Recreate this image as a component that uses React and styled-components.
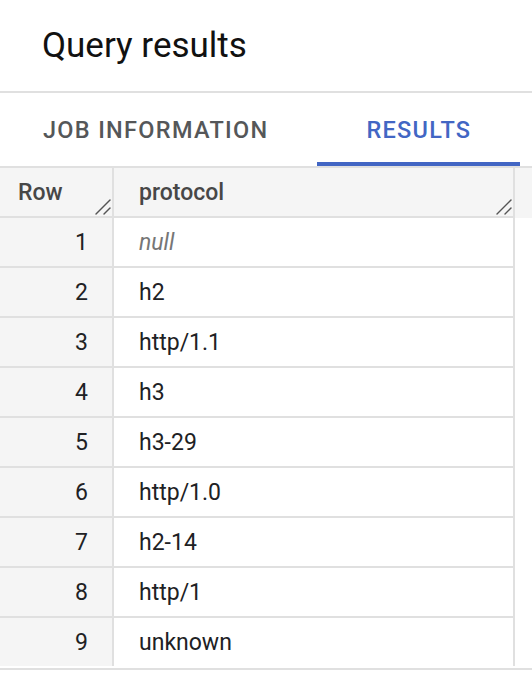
import React from 'react';
import styled, {createGlobalStyle} from 'styled-components';

const rows = ['null', 'h2', 'http/1.1', 'h3', 'h3-29', 'http/1.0', 'h2-14', 'http/1', 'unknown'];

function ResizeHandle() {
    return (
        <Handle width="16" height="16" viewBox="0 0 16 16">
            <line x1="15" y1="1" x2="1" y2="15" />
            <line x1="15" y1="9" x2="9" y2="15" />
        </Handle>
    );
}

export default function App() {
    return (
        <Page>
            <GlobalStyle />
            <Header>
                <Title>Query results</Title>
            </Header>
            <TabBar>
                <Tab>JOB INFORMATION</Tab>
                <Tab active>RESULTS</Tab>
            </TabBar>
            <Table>
                <HeadCell>
                    Row
                    <ResizeHandle />
                </HeadCell>
                <HeadCell>
                    protocol
                    <ResizeHandle />
                </HeadCell>
                <Filler head />
                {rows.map((value, i) => (
                    <React.Fragment key={i}>
                        <NumCell last={i === rows.length - 1}>{i + 1}</NumCell>
                        <ValueCell last={i === rows.length - 1} empty={value === 'null'}>
                            {value}
                        </ValueCell>
                        <Filler />
                    </React.Fragment>
                ))}
            </Table>
        </Page>
    );
}

const GlobalStyle = createGlobalStyle`
    body {
        margin: 0;
        background: #ffffff;
        font-family: Roboto, "Liberation Sans", Arial, sans-serif;
    }
`;

const Page = styled.div`
    width: 532px;
    overflow: hidden;
`;

const Header = styled.div`
    height: 93px;
    padding: 25px 0 0 42px;
    box-sizing: border-box;
    border-bottom: 2px solid #e0e0e0;
`;

const Title = styled.h1`
    margin: 0;
    font-size: 35px;
    font-weight: 400;
    line-height: 41px;
    color: #111111;
`;

const TabBar = styled.div`
    display: flex;
    height: 73px;
    margin-left: -6px;
`;

const Tab = styled.div`
    display: flex;
    align-items: center;
    justify-content: center;
    padding: 4px 49px 0;
    box-sizing: border-box;
    font-size: 23.5px;
    font-weight: 500;
    letter-spacing: 1.3px;
    color: ${p => (p.active ? '#4266c4' : '#555759')};
    border-bottom: 4px solid ${p => (p.active ? '#4266c4' : 'transparent')};
`;

const Table = styled.div`
    display: grid;
    grid-template-columns: 114px 401px 1fr;
    grid-auto-rows: 50px;
    border-top: 2px solid #e0e0e0;
    border-bottom: 2px solid #e0e0e0;
`;

const Cell = styled.div`
    display: flex;
    align-items: center;
    box-sizing: border-box;
    border-right: 2px solid #e0e0e0;
    border-bottom: ${p => (p.last ? 'none' : '2px solid #e0e0e0')};
    height: ${p => (p.last ? '48px' : '50px')};
    font-size: 23px;
`;

const HeadCell = styled(Cell)`
    position: relative;
    background: #f5f5f5;
    font-weight: 500;
    color: #474747;
    padding-left: 18px;

    & + & {
        padding-left: 25px;
    }
`;

const NumCell = styled(Cell)`
    justify-content: flex-end;
    padding-right: 24px;
    background: #f5f5f5;
    color: #202124;
`;

const ValueCell = styled(Cell)`
    padding-left: 25px;
    background: #ffffff;
    color: ${p => (p.empty ? '#767676' : '#202124')};
    font-style: ${p => (p.empty ? 'italic' : 'normal')};
`;

const Filler = styled.div`
    background: ${p => (p.head ? '#f5f5f5' : '#ffffff')};
`;

const Handle = styled.svg`
    position: absolute;
    right: 1px;
    bottom: 1px;
    width: 16px;
    height: 16px;
    stroke: #555555;
    stroke-width: 1.4;
    stroke-linecap: round;
`;
